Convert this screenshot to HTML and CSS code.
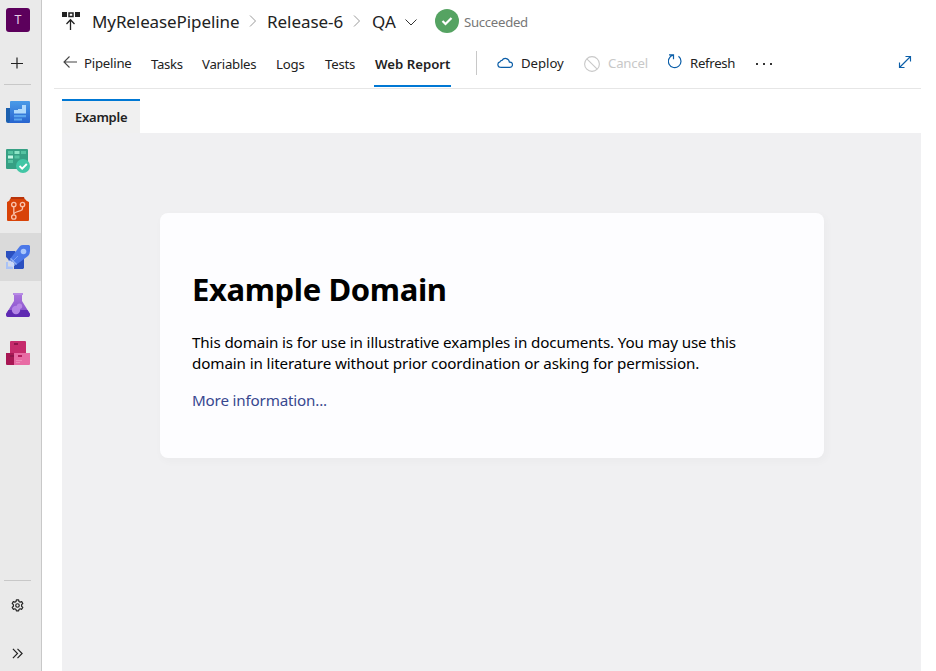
FILE: index.html
```html
<!DOCTYPE html>
<html lang="en">
<head>
<meta charset="utf-8">
<title>Web Report</title>
<link rel="stylesheet" href="styles.css">
</head>
<body>
<nav class="rail">
  <div class="project"><span class="avatar">T</span></div>
  <div class="add"><svg width="12" height="12" viewBox="0 0 12 12"><path d="M0 6.500h12M6 0.500v11" stroke="#222" stroke-width="1.200"/></svg></div>
  <hr class="rule">
  <a class="hub"><svg width="24" height="24" viewBox="0 0 24 24">
    <defs><linearGradient id="ov" x1="0" y1="0" x2="0" y2="1"><stop stop-color="#4a9be8"/><stop offset="1" stop-color="#2864cf"/></linearGradient></defs>
    <path d="M0 7h5v15H2a2 2 0 0 1-2-2z" fill="#1b5fae"/><path d="M4 1q0-1 1-1h18q1 0 1 1v20q0 1-1 1H2q2-1 2-3z" fill="url(#ov)"/>
    <path d="M8 12.500V9h4V8h4V4h4v8.500z" fill="#b0dafc"/><path d="M8 14h12v2.200H8zM8 17.500h8v2H8z" fill="#5ba6ee"/></svg></a>
  <a class="hub"><svg width="24" height="24" viewBox="0 0 24 24">
    <rect y="0" width="22" height="20" rx="1" fill="#36a084"/><path d="M2 2h5v3H2zM15 2h5v3h-5z" fill="#55c3a1"/><path d="M8.500 2h5v3h-5z" fill="#8ce5c6"/><path d="M2 6.500h5v3H2z" fill="#c4f8e6"/><path d="M8.500 6.500h5v3h-5zM2 11h5v3H2z" fill="#55c3a1"/>
    <circle cx="17" cy="17" r="7" fill="#42c6a5"/><path d="M13.500 17l2.700 2.700 4.600-4.700" fill="none" stroke="#fff" stroke-width="1.900"/></svg></a>
  <a class="hub"><svg width="24" height="24" viewBox="0 0 24 24">
    <path d="M5 0h13l1 3H4z" fill="#b9340a"/><path d="M4 2h15q1 2 4 3v18a1 1 0 0 1-1 1H2a1 1 0 0 1-1-1V5q3-1 3-3z" fill="#d84308"/>
    <g fill="none" stroke="#f9c3ac" stroke-width="1.300"><circle cx="7.800" cy="7.500" r="2.200"/><circle cx="16.500" cy="7.500" r="2.200"/><circle cx="7.800" cy="20" r="2.200"/><path d="M7.800 10v7.500M16.500 10v1.500q0 1.500-2 2.200l-4 1.300q-2.700.9-2.700 2.600"/></g></svg></a>
  <a class="hub selected"><svg width="24" height="24" viewBox="0 0 24 24">
    <path d="M0 6h9l3 5-8 7-2-4-2-2z" fill="#2b50c0"/><path d="M9 17l9-6v12l-1 1H8v-4z" fill="#2b50c0"/>
    <path d="M14 1q1-1 3-1h6l1 1v5q0 3-2 5L10 20l-6-6z" fill="#4b78e8"/><circle cx="17.500" cy="6.500" r="2.800" fill="#a9c7fb"/>
    <path d="M6 17l6-6" stroke="#7da0f2" stroke-width="1"/><path d="M4 14l1-1 6 6-1 1z" fill="#92b2f4"/>
    <path d="M0 17h2v4.500h5V24H0z" fill="#a9c2f6"/><path d="M2 17l2-2 5 5-2 2-2-1-1-2z" fill="#c8d8fb"/></svg></a>
  <a class="hub"><svg width="24" height="24" viewBox="0 0 24 24">
    <defs><linearGradient id="fl" x1="0" y1="0" x2="0" y2="1"><stop stop-color="#ae78df"/><stop offset="1" stop-color="#7d48c7"/></linearGradient></defs>
    <path d="M7 0h10v2h-1v6l8 13q0 3-2 3H2q-2 0-2-3L8 8V2H7z" fill="url(#fl)"/><path d="M2.500 17h19l2.500 4q0 3-2 3H2q-2 0-2-3z" fill="#5f2ab2"/>
    <path d="M7 0h10v2H7z" fill="#b78be5"/><circle cx="10" cy="17" r="4.200" fill="#b384e6"/><circle cx="13.500" cy="13.300" r="2.700" fill="#b786e6"/></svg></a>
  <a class="hub"><svg width="24" height="24" viewBox="0 0 24 24">
    <path d="M4 1q0-1 1-1h14q1 0 1 1v11H4z" fill="#c62b6c"/><path d="M0 12h8v12H1q-1 0-1-1z" fill="#a81754"/><path d="M8 12h16v11q0 1-1 1H8z" fill="#e86ba4"/>
    <path d="M8 2h4v2H8zM4 14h4v2H4z" fill="#8f154c"/><path d="M12 14h4v2h-4z" fill="#b51b5d"/><path d="M10 19.500h6M10 21.500h4" stroke="#f08ab8" stroke-width="1"/></svg></a>
  <div class="rail-foot">
    <hr class="rule">
    <a class="hub"><svg width="13" height="13" viewBox="0 0 14 14" fill="none" stroke="#252525" stroke-width="1.300" stroke-linejoin="round"><path d="M5.800 1h2.400l.4 1.700 1.200.7 1.700-.6 1.200 2.100-1.300 1.200v1.700l1.300 1.200-1.200 2.100-1.700-.6-1.200.7-.4 1.600H5.800l-.4-1.600-1.200-.7-1.700.6L1.300 9l1.300-1.200V6.100L1.300 4.900l1.200-2.100 1.700.6 1.200-.7z"/><circle cx="7" cy="7" r="1.900"/></svg></a>
    <a class="hub"><svg width="11" height="11" viewBox="0 0 12 12" fill="none" stroke="#222" stroke-width="1.300"><path d="M1 1l5 5-5 5M6 1l5 5-5 5"/></svg></a>
  </div>
</nav>
<main class="page">
  <header class="crumbs">
    <svg class="stage" width="18" height="19" viewBox="0 0 18 19"><path d="M0 0h5v5H0zM13 0h5v5h-5z" fill="#222"/><path d="M7 1h4v3.500H7z" fill="none" stroke="#222" stroke-width="1.500"/><path d="M8.500 18V8M4.500 12l4-4.300 4 4.300" fill="none" stroke="#222" stroke-width="1.300"/></svg>
    <span class="crumb c-pipe">MyReleasePipeline</span>
    <svg class="sep" width="8" height="12" viewBox="0 0 8 12"><path d="M1 .5L6.500 6 1 11.500" fill="none" stroke="#999" stroke-width="1"/></svg>
    <span class="crumb c-release">Release-6</span>
    <svg class="sep" width="8" height="12" viewBox="0 0 8 12"><path d="M1 .5L6.500 6 1 11.500" fill="none" stroke="#999" stroke-width="1"/></svg>
    <span class="crumb c-stage">QA</span>
    <svg class="down" width="12" height="7" viewBox="0 0 12 7"><path d="M.5 .5L6 6l5.500-5.500" fill="none" stroke="#333" stroke-width="1"/></svg>
    <svg class="ok" width="24" height="24" viewBox="0 0 24 24"><circle cx="12" cy="12" r="12" fill="#55a362"/><path d="M7.500 12l3 3 6-6" fill="none" stroke="#fff" stroke-width="2.200"/></svg>
    <span class="status">Succeeded</span>
  </header>
  <div class="toolbar">
    <a class="item back"><svg width="14" height="12" viewBox="0 0 14 12"><path d="M6.500 .5L1 6l5.500 5.500M1 6h13" fill="none" stroke="#444" stroke-width="1.100"/></svg><span>Pipeline</span></a>
    <a class="item tasks">Tasks</a>
    <a class="item variables">Variables</a>
    <a class="item logs">Logs</a>
    <a class="item tests">Tests</a>
    <a class="item current">Web Report</a>
    <i class="divider"></i>
    <a class="item deploy"><svg width="16" height="11" viewBox="0 0 16 11"><path d="M3.500 10.300h9.300a2.600 2.600 0 0 0 .2-5.200h-.6A4 4 0 0 0 5 3.400 2.700 2.700 0 0 0 2.900 4.900 2.750 2.750 0 0 0 3.500 10.300z" fill="none" stroke="#0b5ea8" stroke-width="1.150"/></svg><span>Deploy</span></a>
    <a class="item cancel"><svg width="16" height="16" viewBox="0 0 16 16"><g fill="none" stroke="#c8c8c8" stroke-width="1.100"><circle cx="8" cy="8" r="7.400"/><path d="M2.800 2.800l10.400 10.400"/></g></svg><span>Cancel</span></a>
    <a class="item refresh"><svg width="14" height="15" viewBox="0 0 14 15"><path d="M1 .8h4.500v4.500M5.200 1.200A6.300 6.300 0 1 0 10.500 2.300" fill="none" stroke="#0b5ea8" stroke-width="1.200"/></svg><span>Refresh</span></a>
    <svg class="more" width="18" height="2" viewBox="0 0 18 2"><path d="M1 0h2v2H1zM8 0h2v2H8zM15 0h2v2h-2z" fill="#333"/></svg>
    <svg class="expand" width="14" height="14" viewBox="0 0 14 14"><path d="M1.500 12.500l11-11M7.500 1.500h5v5M1.500 7.500v5h5" fill="none" stroke="#0b5ea8" stroke-width="1.150"/></svg>
  </div>
  <div class="tabs"><a class="tab">Example</a></div>
  <section class="report">
    <article class="card">
      <h1>Example Domain</h1>
      <p>This domain is for use in illustrative examples in documents. You may use this<br>domain in literature without prior coordination or asking for permission.</p>
      <p><a class="link">More information...</a></p>
    </article>
  </section>
</main>
</body>
</html>
```
FILE: styles.css
```css
* { box-sizing: border-box; }
body {
  margin: 0;
  width: 936px;
  height: 671px;
  overflow: hidden;
  display: flex;
  background: #fff;
  color: #222;
  font-family: "Noto Sans", sans-serif;
  font-size: 13.2px;
}
svg { display: block; flex: none; }

.rail {
  width: 42px;
  height: 671px;
  flex: none;
  display: flex;
  flex-direction: column;
  background: #eaeaea;
  border-right: 1px solid #c8c8c8;
}
.project { height: 41px; padding: 8px 0 0 6px; flex: none; }
.avatar {
  display: block;
  width: 24px;
  height: 24px;
  border-radius: 3px;
  background: #5c005c;
  color: #e6cfe6;
  font-size: 12.5px;
  line-height: 24px;
  text-align: center;
}
.add { height: 43px; flex: none; padding: 16px 0 0 11px; }
.rule { width: 27px; height: 1px; margin: 0 0 0 4px; border: 0; background: #c8c8c8; flex: none; }
.rule + .hub { margin-top: 4px; }
.hub { height: 48px; width: 41px; flex: none; display: flex; align-items: center; padding-left: 6px; }
.selected { background: #dadada; }
.rail-foot { margin-top: auto; margin-bottom: -6px; }
.rail-foot .hub { padding-left: 0; justify-content: center; padding-right: 6px; margin-top: 0; }

.page { flex: 1; min-width: 0; display: flex; flex-direction: column; padding-right: 15px; }
.crumbs { height: 42px; display: flex; align-items: center; padding-left: 20px; flex: none; }
.crumb { font-size: 17px; white-space: nowrap; line-height: 24px; padding-top: 1px; }
.c-pipe { width: 157px; margin-left: 12px; letter-spacing: -.1px; }
.c-release { width: 86px; margin-left: 10px; letter-spacing: -.05px; }
.c-stage { width: 33px; margin-left: 11px; }
.down { margin-top: 2px; }
.ok { margin-left: 18px; }
.status { margin-left: 5px; padding-top: 1px; color: #777; letter-spacing: -.3px; }

.toolbar {
  height: 47px;
  margin-left: 12px;
  padding-left: 9px;
  border-bottom: 1px solid #e6e6e6;
  display: flex;
  flex: none;
}
.item { height: 45px; display: flex; align-items: center; flex: none; white-space: nowrap; padding-bottom: 1px; }
.item svg { margin-right: 8px; }
.back, .deploy, .cancel, .refresh { height: 42px; padding-bottom: 0; }
.back { width: 88px; letter-spacing: -.22px; }
.back svg { margin-right: 7px; margin-top: -2px; }
.tasks { width: 51px; letter-spacing: -.3px; }
.variables { width: 74px; letter-spacing: -.25px; }
.logs { width: 49px; letter-spacing: -.15px; }
.tests { width: 49px; letter-spacing: -.2px; }
.current { width: 77px; padding-left: 1px; border-bottom: 2px solid #0078d4; font-weight: 600; padding-top: 1px; padding-bottom: 0; }
.divider { width: 1px; height: 24px; margin: 9px 20px 0 25px; background: #c8c8c8; }
.deploy { width: 87px; letter-spacing: -.05px; }
.deploy svg { margin-top: -2px; }
.cancel { width: 84px; color: #c8c8c8; letter-spacing: -.2px; }
.cancel svg { margin-top: 1px; }
.refresh { width: 87px; letter-spacing: -.3px; }
.refresh svg { margin-top: -3px; }
.more { margin-top: 21px; }
.expand { margin: 13px 9px 0 auto; }

.tabs { height: 44px; padding: 10px 0 0 20px; display: flex; flex: none; }
.tab {
  width: 78px;
  height: 34px;
  border-top: 2px solid #0078d4;
  background: #f0f0f0;
  padding-left: 13px;
  line-height: 33px;
  font-size: 13px;
  font-weight: 600;
  letter-spacing: -.25px;
}
.report { flex: 1; margin-left: 20px; padding: 80px 97px 0 98px; background: #f0f0f2; }
.card {
  height: 245px;
  padding: 55px 32px 0;
  border-radius: 8px;
  background: #fdfdff;
  box-shadow: 2px 3px 7px 2px rgba(0, 0, 0, .02);
  color: #000;
  font-size: 15.200px;
  line-height: 21px;
  letter-spacing: -.118px;
}
h1 { margin: 0; font-size: 31px; line-height: 42px; font-weight: 700; letter-spacing: -.37px; }
p { margin: 0 0 16px; white-space: nowrap; }
h1 + p { margin-top: 22px; }
.link { color: #38488f; letter-spacing: -.18px; }
```
